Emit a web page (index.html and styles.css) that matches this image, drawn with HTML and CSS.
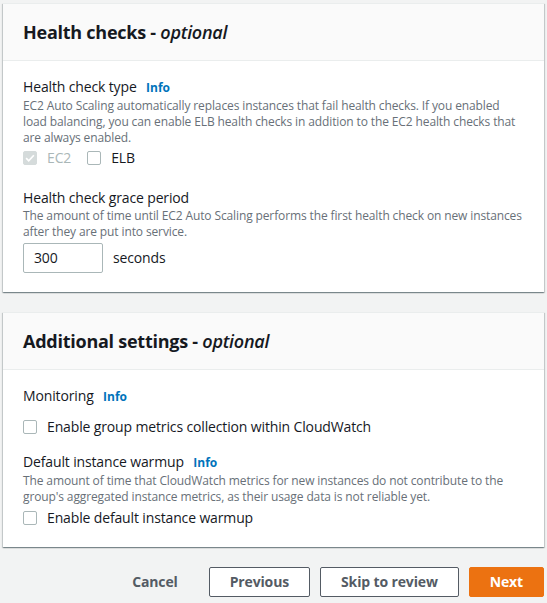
FILE: index.html
```html
<!DOCTYPE html>
<html>
<head>
<meta charset="utf-8">
<link rel="stylesheet" href="styles.css">
</head>
<body>
<div class="page">
  <section class="card">
    <div class="card-header"><h2>Health checks - <i>optional</i></h2></div>
    <div class="card-body">
      <div class="field">
        <div class="label">Health check type <a class="info">Info</a></div>
        <div class="desc">EC2 Auto Scaling automatically replaces instances that fail health checks. If you enabled load balancing, you can enable ELB health checks in addition to the EC2 health checks that are always enabled.</div>
        <div class="checks mt2">
          <label class="check disabled"><span class="box checked"><svg viewBox="0 0 14 14" width="12" height="12"><path d="M2.5 7.2l3 3L11.5 3.8" fill="none" stroke="#fff" stroke-width="2"/></svg></span>EC2</label>
          <label class="check"><span class="box"></span>ELB</label>
        </div>
      </div>
      <div class="field gap20">
        <div class="label">Health check grace period</div>
        <div class="desc">The amount of time until EC2 Auto Scaling performs the first health check on new instances after they are put into service.</div>
        <div class="input-row">
          <div class="input">300</div>
          <span class="unit">seconds</span>
        </div>
      </div>
    </div>
  </section>

  <section class="card">
    <div class="card-header"><h2>Additional settings - <i>optional</i></h2></div>
    <div class="card-body">
      <div class="field">
        <div class="label">Monitoring <a class="info">Info</a></div>
        <div class="checks mt10">
          <label class="check"><span class="box"></span>Enable group metrics collection within CloudWatch</label>
        </div>
      </div>
      <div class="field gap15">
        <div class="label">Default instance warmup <a class="info">Info</a></div>
        <div class="desc">The amount of time that CloudWatch metrics for new instances do not contribute to the group's aggregated instance metrics, as their usage data is not reliable yet.</div>
        <div class="checks mt3">
          <label class="check"><span class="box"></span>Enable default instance warmup</label>
        </div>
      </div>
    </div>
  </section>

  <div class="actions">
    <button class="btn link">Cancel</button>
    <button class="btn normal">Previous</button>
    <button class="btn normal">Skip to review</button>
    <button class="btn primary">Next</button>
  </div>
</div>
</body>
</html>
```

FILE: styles.css
```css
* { box-sizing: border-box; }
html, body { margin: 0; padding: 0; background: #f2f3f3; }
body {
  font-family: "Open Sans", "Noto Sans", sans-serif;
  color: #16191f;
  font-size: 14px;
  line-height: 20px;
  letter-spacing: -0.14px;
}
.page {
  padding: 3px 3px 0 3px;
  display: flex;
  flex-direction: column;
  gap: 20px;
}
.card {
  background: #fff;
  box-shadow: 0 1px 1px 0 rgba(0,28,36,.3), 1px 1px 1px 0 rgba(0,28,36,.15), -1px 1px 1px 0 rgba(0,28,36,.15);
  border-top: 1px solid #eaeded;
}
.card-header {
  background: #fafafa;
  border-bottom: 1px solid #eaeded;
  padding: 0 20px;
  height: 57px;
  display: flex;
  align-items: center;
}
.card-header h2 {
  margin: 0;
  font-size: 18px;
  line-height: 22px;
  font-weight: 700;
  letter-spacing: -0.25px;
}
.card-header h2 i { font-weight: 600; }
.card-body {
  padding: 16px 20px 19px 20px;
}
.label { font-size: 14px; line-height: 20px; }
.info {
  color: #0073bb;
  font-weight: 700;
  font-size: 12px;
  margin-left: 6px;
  letter-spacing: 0;
}
.desc {
  color: #687078;
  font-size: 12px;
  line-height: 16px;
  letter-spacing: -0.12px;
}
.checks {
  display: flex;
  gap: 16px;
}
.check {
  display: flex;
  align-items: center;
  gap: 10px;
  height: 20px;
  font-size: 14px;
}
.check.disabled { color: #aab7b8; }
.box {
  width: 14px;
  height: 14px;
  border: 1px solid #aab7b8;
  border-radius: 2px;
  background: #fff;
  display: flex;
  align-items: center;
  justify-content: center;
}
.box.checked { background: #d5dbdb; border-color: #d5dbdb; }
.input-row {
  display: flex;
  align-items: center;
  gap: 10px;
  margin-top: 3px;
}
.input {
  width: 80px;
  height: 30px;
  border: 1px solid #aab7b8;
  border-radius: 2px;
  padding: 0 10px;
  display: flex;
  align-items: center;
  font-size: 14px;
}
.unit { font-size: 14px; }
.gap20 { margin-top: 20px; }
.gap15 { margin-top: 15px; }
.mt10 { margin-top: 10px; }
.mt3 { margin-top: 3px; }
.mt2 { margin-top: 2px; }
.actions {
  display: flex;
  justify-content: flex-end;
  gap: 10px;
}
.btn {
  font-family: inherit;
  font-size: 14px;
  font-weight: 700;
  letter-spacing: -0.14px;
  height: 30px;
  padding: 0 20px;
  border-radius: 2px;
  border: 1px solid #545b64;
  background: #fff;
  color: #545b64;
  line-height: 28px;
}
.btn.link { border-color: transparent; background: transparent; }
.btn.primary { background: #ec7211; border-color: #ec7211; color: #fff; }
```
